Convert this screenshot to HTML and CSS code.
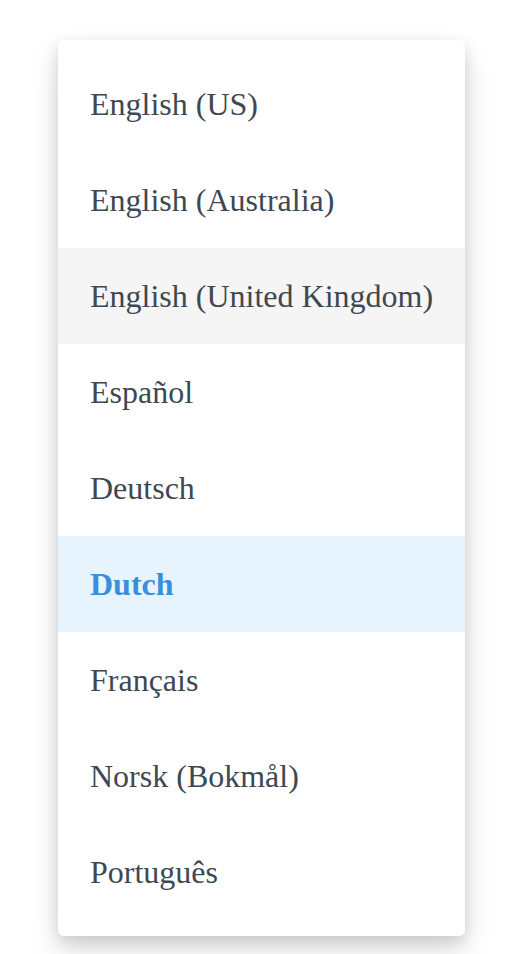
FILE: index.html
```html
<!DOCTYPE html>
<html>
<head>
<meta charset="utf-8">
<link rel="stylesheet" href="styles.css">
</head>
<body>
<ul class="menu">
  <li class="item">English (US)</li>
  <li class="item">English (Australia)</li>
  <li class="item hover">English (United Kingdom)</li>
  <li class="item">Español</li>
  <li class="item">Deutsch</li>
  <li class="item active">Dutch</li>
  <li class="item">Français</li>
  <li class="item">Norsk (Bokmål)</li>
  <li class="item">Português</li>
</ul>
</body>
</html>
```

FILE: styles.css
```css
html, body {
  margin: 0;
  padding: 0;
  background: #ffffff;
}
body {
  padding: 40px 0 0 58px;
  min-height: 954px;
  box-sizing: border-box;
  font-family: "Liberation Serif", "Times New Roman", serif;
}
.menu {
  list-style: none;
  margin: 0;
  padding: 16px 0;
  width: 407px;
  box-sizing: border-box;
  background: #ffffff;
  border-radius: 6px;
  box-shadow: 0 15px 30px 0 rgba(0, 0, 0, 0.13), 0 5px 15px 0 rgba(0, 0, 0, 0.12);
}
.item {
  height: 96px;
  display: flex;
  align-items: center;
  padding: 0 16px 0 32px;
  white-space: nowrap;
  font-size: 32px;
  color: #3d4852;
}
.item.hover {
  background: #f5f5f5;
}
.item.active {
  background: #e8f4fd;
  color: #3a8fdc;
  font-weight: bold;
}
```
